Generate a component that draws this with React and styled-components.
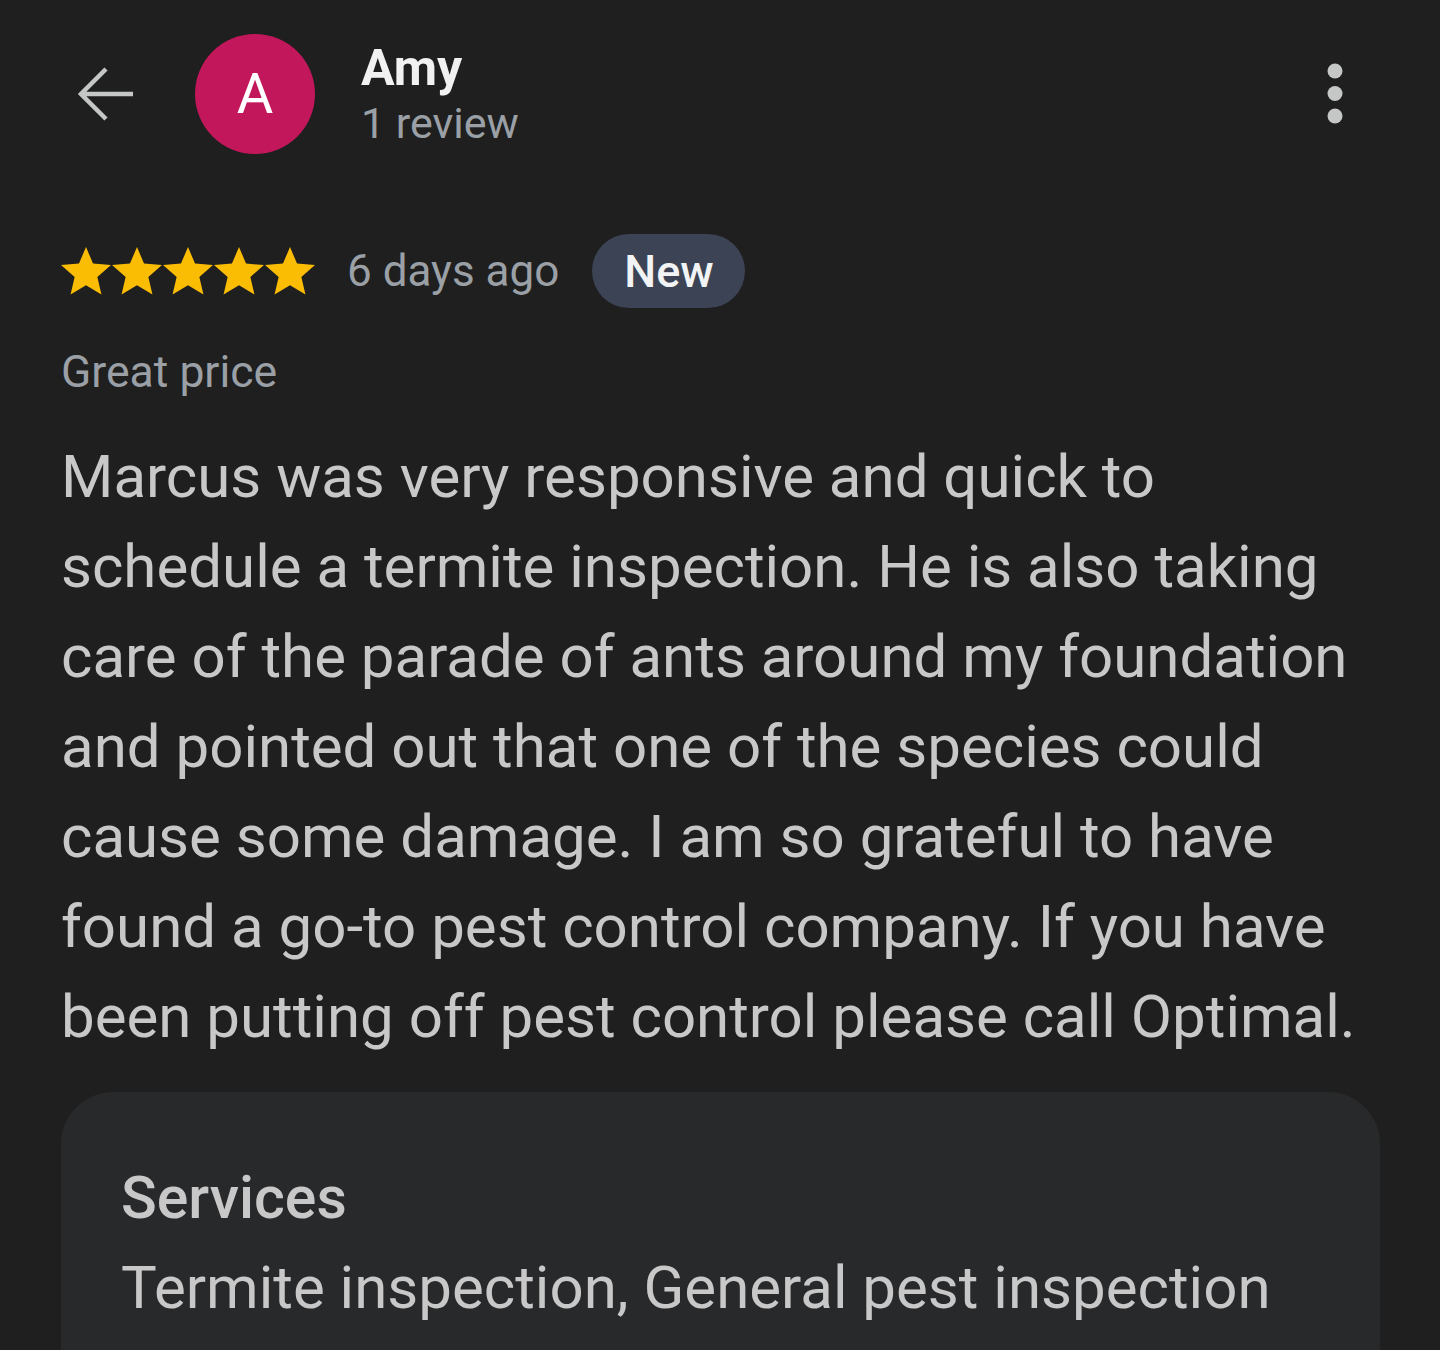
import React from "react";
import styled, { createGlobalStyle } from "styled-components";

const GlobalStyle = createGlobalStyle`
  body {
    margin: 0;
    background: #1f1f1f;
    font-family: Roboto, "Liberation Sans", sans-serif;
  }
`;

const Page = styled.div`
  height: 1350px;
  overflow: hidden;
  background: #1f1f1f;
  padding: 0 60px 0 61px;
  box-sizing: border-box;
`;

const Header = styled.header`
  display: flex;
  align-items: center;
  padding-top: 34px;
  height: 120px;
`;

const IconButton = styled.button`
  background: none;
  border: none;
  padding: 0;
  margin-left: ${(p) => p.$left || 0}px;
  margin-right: ${(p) => p.$right || 0}px;
  display: flex;
  align-items: center;
  justify-content: center;
  width: 60px;
  height: 60px;
  cursor: pointer;
`;

const Avatar = styled.div`
  width: 120px;
  height: 120px;
  border-radius: 50%;
  background: #c2185b;
  color: #fff;
  display: flex;
  align-items: center;
  justify-content: center;
  font-size: 56px;
  margin-left: 60px;
  flex-shrink: 0;
`;

const NameBlock = styled.div`
  margin-left: 46px;
  display: flex;
  flex-direction: column;
  flex: 1;
`;

const Name = styled.div`
  color: #f1f1f1;
  font-size: 50px;
  font-weight: 700;
  line-height: 58px;
`;

const Sub = styled.div`
  color: #9aa0a6;
  font-size: 43px;
  line-height: 52px;
`;

const MetaRow = styled.div`
  display: flex;
  align-items: center;
  margin-top: 80px;
  height: 74px;
`;

const Stars = styled.div`
  display: flex;
  gap: 1px;
`;

const Ago = styled.span`
  color: #9aa0a6;
  font-size: 44px;
  margin-left: 32px;
`;

const Badge = styled.span`
  margin-left: 33px;
  background: #3c4354;
  color: #f1f3f4;
  font-size: 45px;
  font-weight: 500;
  height: 74px;
  padding: 0 31px 0 32px;
  border-radius: 37px;
  display: flex;
  align-items: center;
`;

const Tagline = styled.div`
  color: #9aa0a6;
  font-size: 44.5px;
  line-height: 53px;
  margin-top: 38px;
`;

const Body = styled.p`
  color: #c8c8c8;
  font-size: 60px;
  line-height: 90px;
  margin: 33px 0 0;
`;

const Line = styled.span`
  display: block;
  white-space: nowrap;
`;

const Card = styled.section`
  margin-top: 30px;
  background: #28292b;
  border-radius: 52px;
  padding: 68px 60px 80px;
`;

const CardTitle = styled.div`
  color: #c8c8c8;
  font-size: 59px;
  font-weight: 500;
  line-height: 75px;
`;

const CardText = styled.div`
  color: #c8c8c8;
  font-size: 60px;
  line-height: 75px;
  margin-top: 15px;
  white-space: nowrap;
`;

const Star = () => (
  <svg width="50" height="48" viewBox="2 2 20 19.2">
    <path
      fill="#fbbc04"
      d="M12 17.27L18.18 21l-1.64-7.03L22 9.24l-7.19-.61L12 2 9.19 8.63 2 9.24l5.46 4.73L5.82 21z"
    />
  </svg>
);

const reviewLines = [
  "Marcus was very responsive and quick to",
  "schedule a termite inspection. He is also taking",
  "care of the parade of ants around my foundation",
  "and pointed out that one of the species could",
  "cause some damage. I am so grateful to have",
  "found a go-to pest control company. If you have",
  "been putting off pest control please call Optimal.",
];

export default function App() {
  return (
    <>
      <GlobalStyle />
      <Page>
        <Header>
          <IconButton $left={14} aria-label="Back">
            <svg width="60" height="60" viewBox="0 0 60 60" fill="none">
              <path
                d="M58 30H6M31 5L6 30l25 25"
                stroke="#c4c7c5"
                strokeWidth="4.5"
              />
            </svg>
          </IconButton>
          <Avatar>A</Avatar>
          <NameBlock>
            <Name>Amy</Name>
            <Sub>1 review</Sub>
          </NameBlock>
          <IconButton $right={15} aria-label="More">
            <svg width="20" height="64" viewBox="0 0 20 64">
              <circle cx="10" cy="9" r="7.5" fill="#c4c7c5" />
              <circle cx="10" cy="31.5" r="7.5" fill="#c4c7c5" />
              <circle cx="10" cy="54" r="7.5" fill="#c4c7c5" />
            </svg>
          </IconButton>
        </Header>

        <MetaRow>
          <Stars>
            {[0, 1, 2, 3, 4].map((i) => (
              <Star key={i} />
            ))}
          </Stars>
          <Ago>6 days ago</Ago>
          <Badge>New</Badge>
        </MetaRow>

        <Tagline>Great price</Tagline>

        <Body>
          {reviewLines.map((line) => (
            <Line key={line}>{line}</Line>
          ))}
        </Body>

        <Card>
          <CardTitle>Services</CardTitle>
          <CardText>Termite inspection, General pest inspection</CardText>
        </Card>
      </Page>
    </>
  );
}
